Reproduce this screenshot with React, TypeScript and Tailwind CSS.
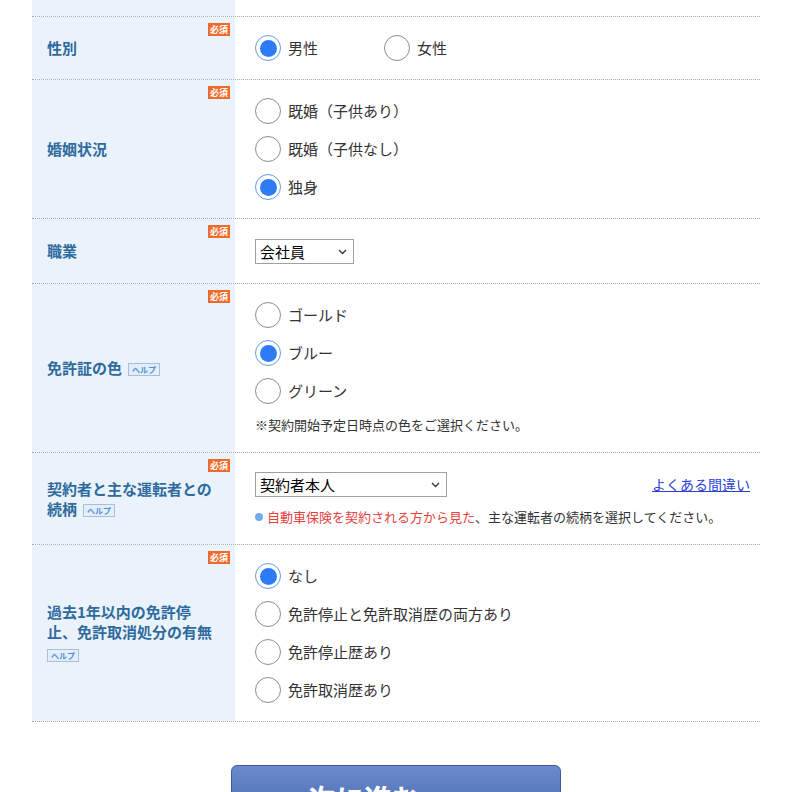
import React from 'react';

const FONT = { fontFamily: '"Noto Sans CJK JP", "Noto Sans", sans-serif' };

const Required = () => (
  <span className="absolute right-[5px] top-[6px] bg-[#ee6b2c] text-white text-[9px] leading-[13px] px-[2px] font-bold">
    必須
  </span>
);

const Help = () => (
  <span className="inline-block whitespace-nowrap align-middle ml-[6px] border border-[#a9bfd6] bg-[#e3eefa] text-[#4d8fd9] text-[8px] leading-[11px] px-[3px] font-bold">
    ヘルプ
  </span>
);

const Radio = ({ label, checked }: { label: string; checked?: boolean }) => (
  <label className="flex items-center h-[28px] gap-[7px]">
    {checked ? (
      <span className="w-[26px] h-[26px] rounded-full border-[1.5px] border-[#5d9cf5] flex items-center justify-center bg-white">
        <span className="w-[17px] h-[17px] rounded-full bg-[#2d7bf6]" />
      </span>
    ) : (
      <span className="w-[26px] h-[26px] rounded-full border-[1.5px] border-[#8d8d8d] bg-white" />
    )}
    <span className="text-[15px] text-[#333]">{label}</span>
  </label>
);

const Select = ({ value, width }: { value: string; width: string }) => (
  <div className={`relative h-[25px] border border-[#a0a0a0] bg-white flex items-center pl-[4px] ${width}`}>
    <span className="text-[15px] text-black leading-none">{value}</span>
    <svg className="absolute right-[6px] top-[9px]" width="9" height="6" viewBox="0 0 9 6">
      <path d="M1 1l3.5 3.5L8 1" fill="none" stroke="#333" strokeWidth="1.3" />
    </svg>
  </div>
);

const Row = ({ label, children }: { label: React.ReactNode; children: React.ReactNode }) => (
  <div className="flex border-b border-dotted border-[#a8a8a8]">
    <div className="relative w-[203px] shrink-0 bg-[#eaf3fb] flex items-center pl-[15px] pr-[10px]">
      <Required />
      <div className="text-[15px] font-bold text-[#2e6a9e] leading-[20px]">{label}</div>
    </div>
    <div className="flex-1 pl-[20px] pr-[10px] py-[17px] flex flex-col justify-center">{children}</div>
  </div>
);

export default function App() {
  return (
    <div className="w-[800px] h-[792px] overflow-hidden bg-white" style={FONT}>
      <div className="mx-[32px] w-[728px]">
        <div className="flex h-[17px] border-b border-dotted border-[#a8a8a8]">
          <div className="w-[203px] bg-[#eaf3fb]" />
        </div>

        <Row label="性別">
          <div className="flex">
            <div className="w-[129px]">
              <Radio label="男性" checked />
            </div>
            <Radio label="女性" />
          </div>
        </Row>

        <Row label="婚姻状況">
          <div className="flex flex-col gap-[10px]">
            <Radio label="既婚（子供あり）" />
            <Radio label="既婚（子供なし）" />
            <Radio label="独身" checked />
          </div>
        </Row>

        <Row label="職業">
          <div className="h-[30px] flex items-center">
            <Select value="会社員" width="w-[99px]" />
          </div>
        </Row>

        <Row
          label={
            <>
              免許証の色
              <Help />
            </>
          }
        >
          <div className="flex flex-col gap-[10px]">
            <Radio label="ゴールド" />
            <Radio label="ブルー" checked />
            <Radio label="グリーン" />
          </div>
          <p className="mt-[10px] text-[13px] leading-[20px] text-[#333]">※契約開始予定日時点の色をご選択ください。</p>
        </Row>

        <Row
          label={
            <>
              契約者と主な運転者との
              <br />
              続柄
              <Help />
            </>
          }
        >
          <div className="flex items-center justify-between pt-[2px]">
            <Select value="契約者本人" width="w-[192px]" />
            <a href="#" className="text-[14px] text-[#2b3fd8] underline">
              よくある間違い
            </a>
          </div>
          <p className="mt-[10px] text-[13px] leading-[20px] text-[#333] flex items-center">
            <span className="inline-block w-[8px] h-[8px] rounded-full bg-[#74a9ee] mr-[4px]" />
            <span className="text-[#e8403a]">自動車保険を契約される方から見た</span>、主な運転者の続柄を選択してください。
          </p>
        </Row>

        <Row
          label={
            <>
              過去1年以内の免許停
              <br />
              止、免許取消処分の有無
              <div className="mt-[2px] -ml-[6px]">
                <Help />
              </div>
            </>
          }
        >
          <div className="flex flex-col gap-[10px]">
            <Radio label="なし" checked />
            <Radio label="免許停止と免許取消歴の両方あり" />
            <Radio label="免許停止歴あり" />
            <Radio label="免許取消歴あり" />
          </div>
        </Row>

        <div className="flex justify-center pt-[43px]">
          <button className="w-[330px] h-[66px] rounded-[6px] border border-[#3b5ca3] bg-gradient-to-b from-[#6b8bca] to-[#4061ad] text-white text-[28px] font-bold flex items-center justify-center gap-[56px]">
            <span>次に進む</span>
            <span className="text-[24px]">›</span>
          </button>
        </div>
      </div>
    </div>
  );
}
